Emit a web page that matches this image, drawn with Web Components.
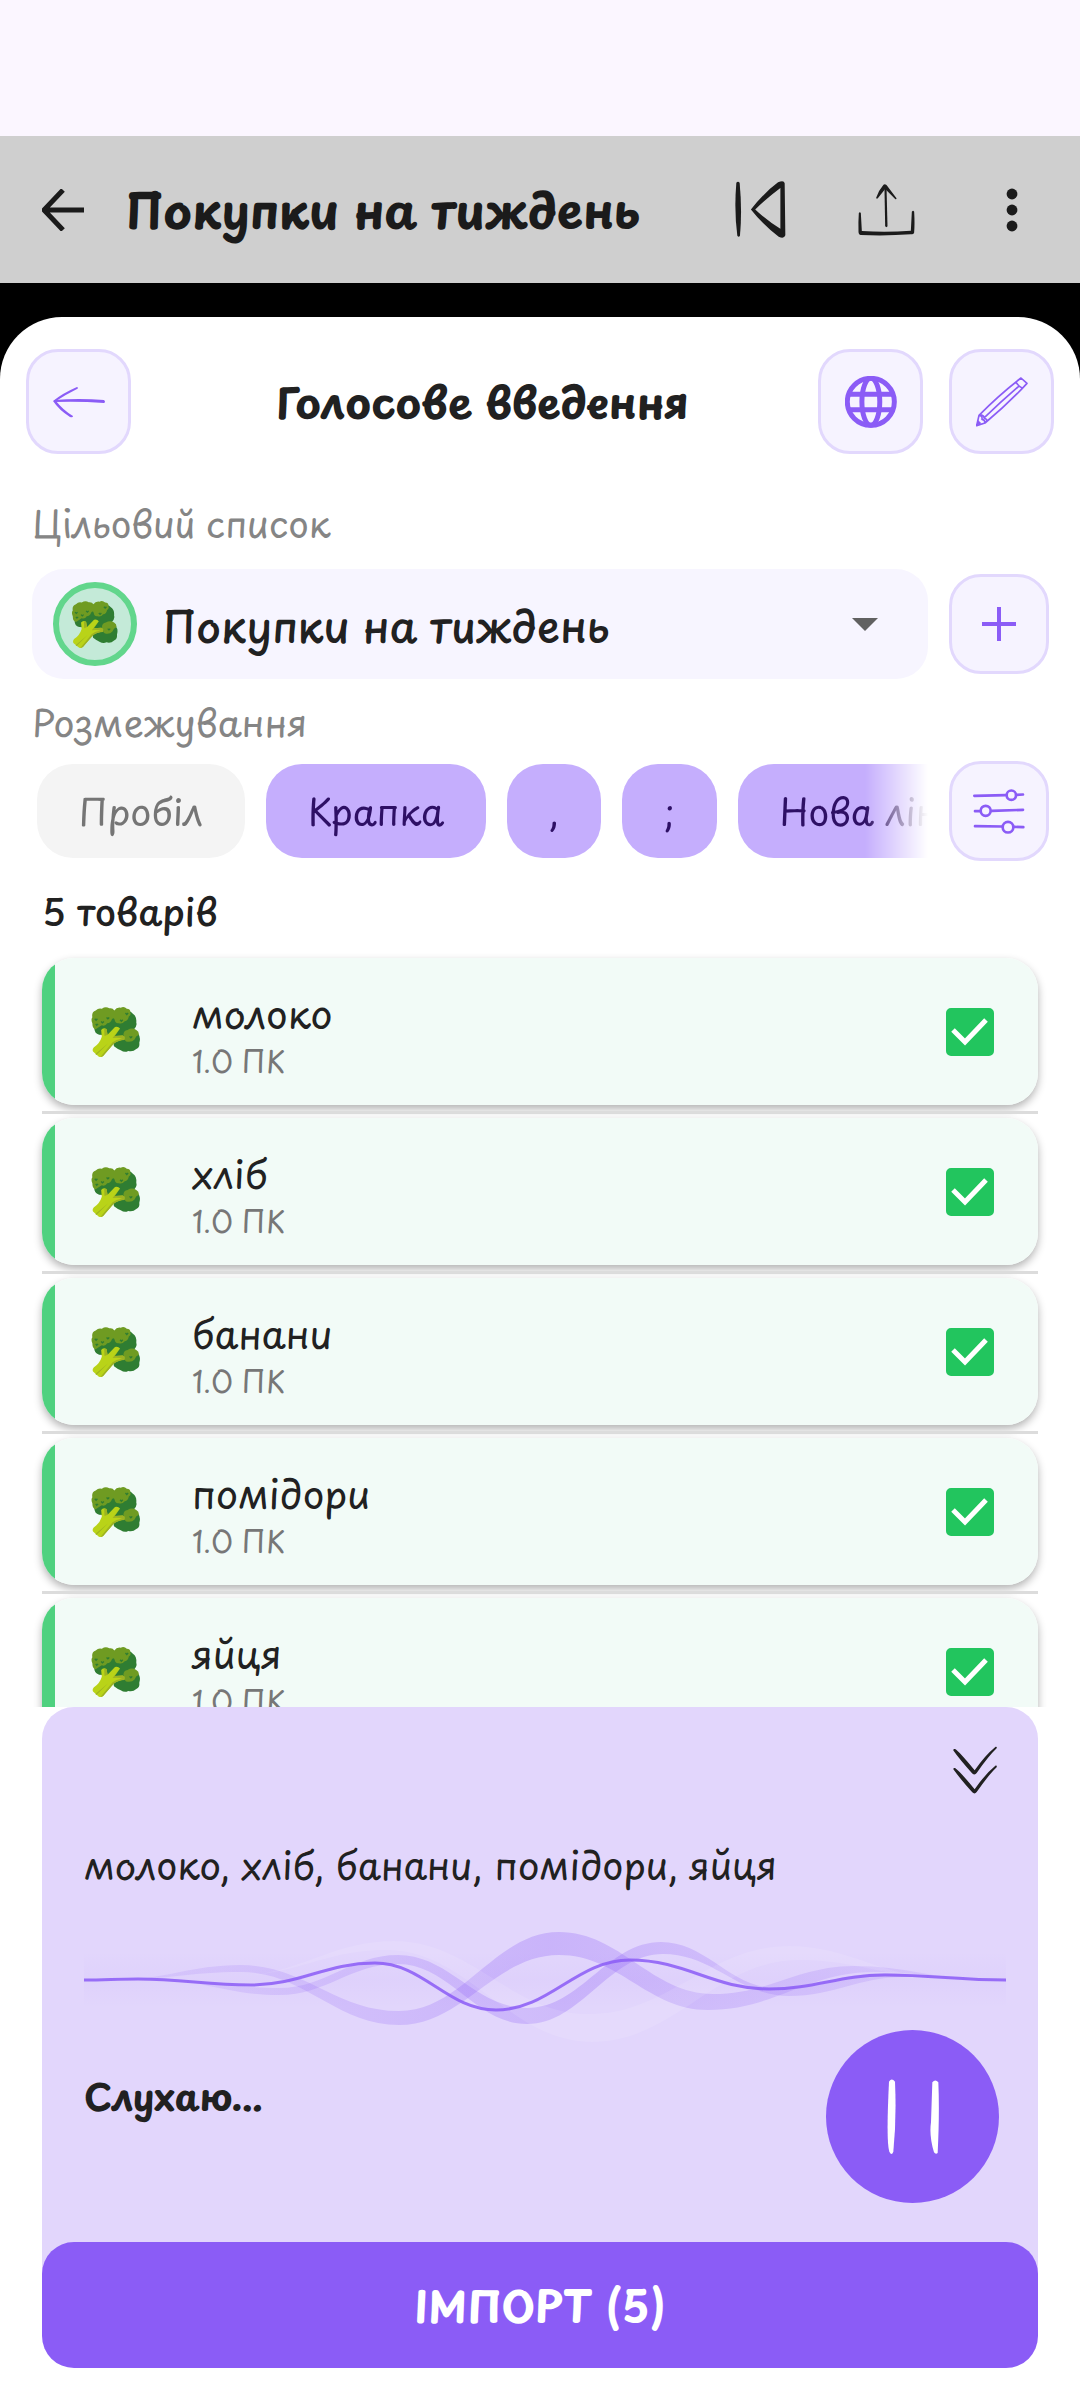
<!DOCTYPE html>
<html lang="uk">
<head>
<meta charset="utf-8">
<meta name="viewport" content="width=device-width, initial-scale=1">
<title>Голосове введення</title>
<style>
  body {
    margin: 0;
    background: #000;
    font-family: "Playpen Sans", Pangolin, Mynerve, "Patrick Hand", "Shantell Sans", Roboto, "Noto Sans", sans-serif;
    --text: #212121;
    --muted: #858585;
    --accent: #8b5cf6;
    --accent-line: #e2d8fd;
    --accent-soft: #f6f3ff;
    --panel: #e2d6fc;
  }
</style>
</head>
<body>
<shopping-app></shopping-app>

<script>
// icons.js
const ICONS = {
  back: {
    box: '0 0 42 42',
    body: '<path d="M21 1 L2 21 L21 41 M2 21 H42" fill="none" stroke="currentColor" stroke-width="5"/>',
  },
  previous: {
    box: '102 92 154 172',
    body: `<path d="M106 97 Q111 91 116 97 Q124 180 117 257 Q113 264 109 257 Q99 180 106 97Z"/>
      <path fill-rule="evenodd" d="M150 178 Q190 127 232 96 Q250 88 252 99 L254 256 Q250 268 234 260 Q190 228 150 178Z M163 178 Q200 213 239 236 L239 113 Q200 142 163 178Z"/>`,
  },
  share: {
    box: '472 101 170 156',
    body: `<path d="M474 188 Q477 184 480 188 L483 242 Q557 247 630 241 L633 184 Q637 179 640 184 Q642 220 640 246 Q640 252 630 252 Q557 257 480 254 Q473 253 473 244 Q472 215 474 188Z"/>
      <path d="M551 120 L551 108 L557 108 L560 228 Q557 233 553 228Z"/>
      <path d="M526 142 Q534 119 548 103 Q552 100 557 104 L587 144 Q587 148 583 146 L553 116 L531 144 Q527 147 526 142Z"/>`,
  },
  more: {
    box: '0 0 12 44',
    body: '<circle cx="6" cy="6" r="5.4"/><circle cx="6" cy="22" r="5.4"/><circle cx="6" cy="38" r="5.4"/>',
  },
  arrow: {
    box: '0 0 52 32',
    body: `<path d="M1 14 Q26 12 51 14 Q53 16 51 17 Q26 15 1 16Z"/>
      <path d="M0 15 Q10 7 24 1 Q26 2 24 3 Q12 9 3 15 Q10 24 20 30 Q20 32 17 31 Q6 24 0 15Z"/>`,
  },
  globe: {
    box: '0 0 157 157',
    body: `<g fill="none" stroke="currentColor" stroke-width="15">
      <circle cx="78" cy="78" r="71"/><ellipse cx="78" cy="78" rx="27" ry="71"/>
      <path d="M12 55 H145 M12 102 H145"/></g>`,
  },
  pencil: {
    box: '0 0 156 148',
    body: `<g fill="none" stroke="currentColor" stroke-width="5" stroke-linejoin="round" stroke-linecap="round">
      <path d="M9 114 Q70 52 135 2 L153 18 Q98 78 27 137 L2 145 Z M9 114 Q20 115 18 126 Q27 127 27 137 M120 15 Q130 30 139 32 M25 121 Q78 70 128 27 M17 113 Q25 116 24 122 Q33 125 33 131"/></g>
      <path d="M6 128 L16 138 L1 146Z"/>`,
  },
  plus: {
    box: '0 0 34 34',
    body: '<path d="M17 0 V34 M0 17 H34" fill="none" stroke="currentColor" stroke-width="4"/>',
  },
  tune: {
    box: '0 0 156 134',
    body: `<g fill="none" stroke="currentColor" stroke-width="8" stroke-linecap="round">
      <path d="M4 20 L98 18 M131 17 L150 16 M6 66 L20 66 M56 65 L150 62 M6 111 L88 112 M122 113 L151 114"/>
      <circle cx="115" cy="18" r="14"/><circle cx="38" cy="65" r="15"/><circle cx="105" cy="114" r="16"/></g>`,
  },
  collapse: {
    box: '0 0 130 142',
    body: `<path d="M1 13 Q0 8 6 9 Q18 16 64 72 Q94 28 126 2 Q131 1 129 7 Q105 30 70 80 Q64 88 57 81 Q20 40 1 13Z"/>
      <path transform="translate(0 56)" d="M1 13 Q0 8 6 9 Q18 16 64 72 Q94 28 126 2 Q131 1 129 7 Q105 30 70 80 Q64 88 57 81 Q20 40 1 13Z"/>`,
  },
  pause: {
    box: '0 0 156 228',
    body: `<path d="M6 8 Q14 -5 24 8 Q29 120 19 218 Q14 232 7 218 Q-3 190 6 8Z"/>
      <path d="M136 10 Q145 -1 154 10 Q158 100 152 222 Q146 227 141 220 Q126 170 132 130Z"/>`,
  },
  caret: {
    box: '0 0 26 13',
    body: '<path d="M0 0 H26 L13 13Z"/>',
  },
  broccoli: {
    box: '0 0 144 148',
    body: `<path fill="#2f7d32" d="M8 58 Q6 78 22 82 L60 84 L66 116 Q76 124 86 128 Q98 136 108 130 Q122 134 132 124 Q143 120 141 106 Q146 90 138 80 Q134 68 122 70 Q136 58 132 46 Q134 28 122 20 Q112 8 98 16 L40 20Z"/>
      <path fill="#6f9b22" d="M2 48 Q-3 36 2 30 Q-1 14 12 10 Q20 2 30 5 Q42 -3 52 4 Q62 2 67 10 Q74 0 86 2 Q96 -3 104 5 Q116 6 114 16 Q118 24 110 28 Q108 40 98 42 Q90 52 80 48 Q70 50 68 38 Q66 30 60 36 Q56 48 46 48 Q40 58 30 54 Q20 60 12 66 Q2 64 2 48Z"/>
      <path fill="#6f9b22" d="M94 82 Q94 70 106 68 Q120 60 132 68 Q140 72 140 82 Q130 86 127 96 Q120 104 108 103 Q96 104 94 82Z"/>
      <path fill="#b9d318" d="M28 68 Q34 60 44 65 L47 82 L69 59 Q78 56 84 64 L68 86 L92 84 Q98 86 97 96 Q76 100 66 108 L34 145 Q26 152 18 144 L4 132 Q1 126 6 120 Q24 108 30 88Z"/>
      <path fill="#9db223" d="M84 64 L68 86 L92 84 L98 88 L97 98 Q76 99 65 109 L34 145 L26 148 L62 104 Q72 96 90 93 Q76 90 62 92 Z M37 64 L44 66 L47 82 L38 86Z M48 108 L14 142 L11 139Z"/>
      <path fill="none" stroke="#2f7d32" stroke-width="4" d="M9 35 l4 4 l4 -4 M28 43 l4 4 l4 -4 M44 31 l4 4 l4 -4 M12 50 l3 4 l4 -4 M84 38 l4 4 l4 -4 M100 18 l4 4 l4 -4 M112 87 l4 4 l4 -4"/>`,
  },
}

class SketchIcon extends HTMLElement {
  constructor() {
    super()
    this.attachShadow({ mode: 'open' })
  }

  connectedCallback() {
    const { box, body } = ICONS[this.getAttribute('name')]
    this.shadowRoot.innerHTML = `
      <style>
        :host { display: inline-block; flex: none; line-height: 0; }
        svg { display: block; width: 100%; height: 100%; fill: currentColor; }
      </style>
      <svg viewBox="${box}" aria-hidden="true">${body}</svg>
    `
  }
}
customElements.define('sketch-icon', SketchIcon)

// rounded-button.js
customElements.define('rounded-button', class RoundedButton extends HTMLElement {
  constructor() {
    super()
    this.attachShadow({ mode: 'open' })
  }

  connectedCallback() {
    this.shadowRoot.innerHTML = `
      <style>
        :host { display: block; flex: none; width: 100px; height: 100px; }
        :host([large]) { width: 105px; height: 105px; }
        button {
          display: flex;
          align-items: center;
          justify-content: center;
          box-sizing: border-box;
          width: 100%;
          height: 100%;
          padding: 0;
          border: 3px solid var(--accent-line);
          border-radius: 32px;
          background: var(--accent-soft);
          color: var(--accent);
        }
      </style>
      <button type="button" aria-label="${this.getAttribute('label')}"><slot></slot></button>
    `
  }
})

// app-bar.js
customElements.define('app-bar', class AppBar extends HTMLElement {
  constructor() {
    super()
    this.attachShadow({ mode: 'open' }).innerHTML = `
      <style>
        :host {
          display: block;
          padding-top: 136px;
          background: #fbf6ff;
          color: #1b1b1b;
        }
        header {
          display: flex;
          align-items: stretch;
          height: 147px;
          padding-right: 5px;
          background: #cfcfcf;
        }
        h1 {
          flex: 1;
          min-width: 0;
          margin: 0;
          font-size: 48px;
          line-height: 147px;
          font-weight: 700;
          white-space: nowrap;
        }
        button {
          display: flex;
          flex: none;
          align-items: center;
          justify-content: center;
          width: 126px;
          padding: 0;
          border: 0;
          background: none;
          color: inherit;
        }
        [name=back] { width: 42px; height: 42px; }
        [name=previous] { width: 51px; height: 57px; }
        [name=share] { width: 57px; height: 52px; }
        [name=more] { width: 12px; height: 44px; }
      </style>
      <header>
        <button type="button" aria-label="Назад"><sketch-icon name="back"></sketch-icon></button>
        <h1><slot></slot></h1>
        <button type="button" aria-label="Попередній"><sketch-icon name="previous"></sketch-icon></button>
        <button type="button" aria-label="Поділитися"><sketch-icon name="share"></sketch-icon></button>
        <button type="button" aria-label="Більше"><sketch-icon name="more"></sketch-icon></button>
      </header>
    `
  }
})

// sheet-header.js
customElements.define('sheet-header', class SheetHeader extends HTMLElement {
  constructor() {
    super()
    this.attachShadow({ mode: 'open' }).innerHTML = `
      <style>
        :host {
          display: flex;
          align-items: center;
          gap: 26px;
          padding: 32px 26px 0;
        }
        h2 {
          flex: 1;
          margin: 0;
          padding-left: 16px;
          font-size: 43px;
          line-height: 56px;
          font-weight: 700;
          text-align: center;
          white-space: nowrap;
        }
        [name=arrow] { width: 52px; height: 32px; }
        [name=globe] { width: 52px; height: 52px; }
        [name=pencil] { width: 52px; height: 50px; }
      </style>
      <rounded-button large label="Назад"><sketch-icon name="arrow"></sketch-icon></rounded-button>
      <h2><slot></slot></h2>
      <rounded-button large label="Мова"><sketch-icon name="globe"></sketch-icon></rounded-button>
      <rounded-button large label="Редагувати"><sketch-icon name="pencil"></sketch-icon></rounded-button>
    `
  }
})

// target-picker.js
customElements.define('target-picker', class TargetPicker extends HTMLElement {
  constructor() {
    super()
    this.attachShadow({ mode: 'open' }).innerHTML = `
      <style>
        :host { display: block; padding: 45px 31px 0 32px; }
        label {
          display: block;
          margin-bottom: 22px;
          color: var(--muted);
          font-size: 37px;
          line-height: 48px;
        }
        .row { display: flex; align-items: center; gap: 21px; }
        .field {
          position: relative;
          display: flex;
          flex: 1;
          align-items: center;
          height: 110px;
          border-radius: 32px;
          background: #f7f5ff;
        }
        .badge {
          display: flex;
          align-items: center;
          justify-content: center;
          box-sizing: border-box;
          width: 84px;
          height: 84px;
          margin-left: 21px;
          border: 6px solid #62d68c;
          border-radius: 50%;
          background: #c4ead8;
        }
        select {
          flex: 1;
          height: 100%;
          padding: 2px 80px 0 26px;
          border: 0;
          appearance: none;
          background: none;
          color: var(--text);
          font-family: inherit;
          font-size: 43px;
          font-weight: 500;
        }
        [name=broccoli] { width: 46px; height: 47px; }
        [name=caret] {
          position: absolute;
          right: 50px;
          width: 26px;
          height: 13px;
          color: #616161;
          pointer-events: none;
        }
        [name=plus] { width: 34px; height: 34px; }
      </style>
      <label for="target">Цільовий список</label>
      <div class="row">
        <div class="field">
          <span class="badge"><sketch-icon name="broccoli"></sketch-icon></span>
          <select id="target"><option>Покупки на тиждень</option></select>
          <sketch-icon name="caret"></sketch-icon>
        </div>
        <rounded-button label="Додати список"><sketch-icon name="plus"></sketch-icon></rounded-button>
      </div>
    `
  }
})

// separator-chips.js
const SEPARATORS = [
  { text: 'Пробіл', on: false },
  { text: 'Крапка', on: true },
  { text: ',', on: true },
  { text: ';', on: true },
  { text: 'Нова лінія', on: true },
]

customElements.define('separator-chips', class SeparatorChips extends HTMLElement {
  constructor() {
    super()
    this.attachShadow({ mode: 'open' }).innerHTML = `
      <style>
        :host { display: block; padding: 19px 31px 0 32px; }
        h3 {
          margin: 0 0 15px;
          color: var(--muted);
          font-size: 37px;
          line-height: 48px;
          font-weight: 400;
        }
        .row { display: flex; align-items: center; gap: 21px; }
        .chips {
          display: flex;
          flex: 1;
          gap: 21px;
          min-width: 0;
          padding-left: 5px;
          overflow: hidden;
          mask-image: linear-gradient(to left, transparent, #000 63px);
        }
        button {
          flex: none;
          height: 94px;
          padding: 0 42px;
          border: 0;
          border-radius: 36px;
          background: #f4f4f4;
          color: #757575;
          font-family: inherit;
          font-size: 37px;
          white-space: nowrap;
        }
        button[aria-pressed=true] { background: #c5aefd; color: #2e1065; }
        [name=tune] { width: 52px; height: 45px; }
      </style>
      <h3>Розмежування</h3>
      <div class="row">
        <div class="chips">
          ${SEPARATORS.map(s => `<button type="button" aria-pressed="${s.on}">${s.text}</button>`).join('')}
        </div>
        <rounded-button label="Налаштування"><sketch-icon name="tune"></sketch-icon></rounded-button>
      </div>
    `
    this.shadowRoot.querySelectorAll('button').forEach(button => {
      button.addEventListener('click', () => {
        button.setAttribute('aria-pressed', button.getAttribute('aria-pressed') !== 'true')
      })
    })
  }
})

// product-card.js
customElements.define('product-card', class ProductCard extends HTMLElement {
  constructor() {
    super()
    this.attachShadow({ mode: 'open' }).innerHTML = `
      <style>
        :host { display: block; }
        :host(:not(:first-of-type)) { margin-top: 6px; padding-top: 4px; border-top: 3px solid #dcdcdc; }
        .card {
          display: flex;
          align-items: center;
          height: 147px;
          padding: 0 44px 0 49px;
          border-radius: 32px;
          background: linear-gradient(to right, #4fd17f 13px, #f2fbf7 13px);
          box-shadow: 0 4px 8px rgba(0, 0, 0, .3);
        }
        label {
          display: flex;
          flex: 1;
          flex-direction: column;
          margin-left: 51px;
          padding-top: 8px;
          color: var(--text);
          font-size: 39px;
          line-height: 50px;
        }
        small { color: #777; font-size: 30px; line-height: 46px; }
        input {
          width: 48px;
          height: 48px;
          margin: 0;
          appearance: none;
          border: 3px solid #22c55e;
          border-radius: 5px;
        }
        input:checked {
          background: #22c55e url('data:image/svg+xml,<svg xmlns="http://www.w3.org/2000/svg" viewBox="0 0 48 48"><path d="M7 22 L19 34 L40 12" fill="none" stroke="white" stroke-width="5"/></svg>') border-box;
        }
        [name=broccoli] { width: 50px; height: 50px; }
      </style>
      <div class="card">
        <sketch-icon name="broccoli"></sketch-icon>
        <label for="pick"><slot></slot><small>1.0 ПК</small></label>
        <input id="pick" type="checkbox" checked>
      </div>
    `
  }
})

// wave-line.js
// every point is a crest or a trough, so the tangent there is flat
function trace(points) {
  let d = ''
  for (let i = 1; i < points.length; i++) {
    const [x0, y0] = points[i - 1]
    const [x1, y1] = points[i]
    const dx = (x1 - x0) * 0.4
    d += ` C${x0 + dx} ${y0} ${x1 - dx} ${y1} ${x1} ${y1}`
  }
  return d
}

const line = points => `M${points[0]}` + trace(points)
const band = (upper, lower) => {
  const back = [...lower].reverse()
  return line(upper) + ` L${back[0]}` + trace(back) + 'Z'
}

const VOICE = [[0, 100], [54, 99], [167, 105], [291, 83], [412, 130], [546, 80], [685, 109], [801, 95], [922, 100]]
const BANDS = [
  {
    fill: 'url(#fade)',
    upper: [[30, 100], [157, 85], [315, 131], [475, 52], [629, 114], [770, 86], [900, 99]],
    lower: [[30, 100], [157, 92], [315, 145], [475, 75], [624, 130], [790, 92], [900, 99]],
  },
  {
    fill: 'url(#fade)',
    upper: [[60, 98], [195, 108], [314, 75], [443, 128], [577, 62], [692, 108], [801, 93], [900, 99]],
    lower: [[60, 98], [195, 115], [314, 84], [443, 144], [579, 74], [705, 116], [820, 97], [900, 99]],
  },
  {
    fill: 'rgba(255, 255, 255, .1)',
    upper: [[150, 96], [310, 61], [505, 134], [705, 66], [860, 98]],
    lower: [[150, 96], [302, 70], [508, 162], [715, 80], [860, 98]],
  },
]

customElements.define('wave-line', class WaveLine extends HTMLElement {
  constructor() {
    super()
    this.attachShadow({ mode: 'open' }).innerHTML = `
      <style>
        :host { display: block; }
        svg { display: block; width: 100%; height: 100px; overflow: visible; }
      </style>
      <svg viewBox="0 50 922 100" preserveAspectRatio="none" aria-hidden="true">
        <defs>
          <linearGradient id="glow" x2="0" y2="1">
            <stop offset="0" stop-color="#8b5cf6" stop-opacity="0"/>
            <stop offset=".5" stop-color="#8b5cf6" stop-opacity=".04"/>
            <stop offset="1" stop-color="#8b5cf6" stop-opacity="0"/>
          </linearGradient>
          <linearGradient id="fade">
            <stop offset="0" stop-color="#8b5cf6" stop-opacity=".1"/>
            <stop offset=".5" stop-color="#8b5cf6" stop-opacity=".28"/>
            <stop offset="1" stop-color="#8b5cf6" stop-opacity=".1"/>
          </linearGradient>
        </defs>
        <rect y="72" width="922" height="56" fill="url(#glow)"/>
        ${BANDS.map(b => `<path d="${band(b.upper, b.lower)}" fill="${b.fill}"/>`).join('')}
        <path d="${line(VOICE)}" fill="none" stroke="#8b5cf6" stroke-opacity=".85" stroke-width="3"/>
      </svg>
    `
  }
})

// voice-panel.js
customElements.define('voice-panel', class VoicePanel extends HTMLElement {
  constructor() {
    super()
    this.attachShadow({ mode: 'open' }).innerHTML = `
      <style>
        :host {
          display: block;
          margin: 0 42px;
          padding: 21px 32px 102px 42px;
          border-radius: 32px 32px 0 0;
          background: var(--panel);
          color: var(--text);
        }
        button { display: flex; align-items: center; justify-content: center; padding: 0; border: 0; }
        .collapse {
          width: 84px;
          height: 84px;
          margin: 0 -11px 0 auto;
          background: none;
          color: inherit;
        }
        p { margin: 29px 0 41px; font-size: 38px; line-height: 48px; }
        .row { display: flex; align-items: flex-start; justify-content: space-between; padding-right: 7px; }
        strong { padding-top: 42px; font-size: 37px; line-height: 48px; }
        .pause {
          width: 173px;
          height: 173px;
          border-radius: 50%;
          background: var(--accent);
          color: #fff;
        }
        [name=collapse] { width: 44px; height: 48px; }
        [name=pause] { width: 52px; height: 76px; }
      </style>
      <button class="collapse" type="button" aria-label="Згорнути"><sketch-icon name="collapse"></sketch-icon></button>
      <p><slot></slot></p>
      <wave-line></wave-line>
      <div class="row">
        <strong>Слухаю...</strong>
        <button class="pause" type="button" aria-label="Пауза"><sketch-icon name="pause"></sketch-icon></button>
      </div>
    `
  }
})

// import-button.js
customElements.define('import-button', class ImportButton extends HTMLElement {
  constructor() {
    super()
    this.attachShadow({ mode: 'open' }).innerHTML = `
      <style>
        /* covers the lower edge of the panel */
        :host { display: block; position: relative; margin: -63px 42px 32px; }
        button {
          width: 100%;
          height: 126px;
          border: 0;
          border-radius: 32px;
          background: var(--accent);
          color: #fff;
          font-family: inherit;
          font-size: 43px;
          font-weight: 700;
        }
      </style>
      <button type="button"><slot></slot></button>
    `
  }
})

// shopping-app.js
const PRODUCTS = ['молоко', 'хліб', 'банани', 'помідори', 'яйця']

customElements.define('shopping-app', class ShoppingApp extends HTMLElement {
  constructor() {
    super()
    this.attachShadow({ mode: 'open' }).innerHTML = `
      <style>
        :host { display: flex; flex-direction: column; height: 100vh; }
        main {
          display: flex;
          flex: 1;
          flex-direction: column;
          min-height: 0;
          margin-top: 34px;
          border-radius: 62px 62px 0 0;
          background: #fff;
          color: var(--text);
        }
        .count {
          margin: 26px 42px 0;
          font-size: 37px;
          line-height: 48px;
          font-weight: 500;
        }
        .list {
          flex: 1;
          min-height: 0;
          padding: 23px 42px 0;
          overflow-y: auto;
          scrollbar-width: none;
        }
      </style>
      <app-bar>Покупки на тиждень</app-bar>
      <main>
        <sheet-header>Голосове введення</sheet-header>
        <target-picker></target-picker>
        <separator-chips></separator-chips>
        <p class="count">${PRODUCTS.length} товарів</p>
        <div class="list">
          ${PRODUCTS.map(name => `<product-card>${name}</product-card>`).join('')}
        </div>
        <voice-panel>${PRODUCTS.join(', ')}</voice-panel>
        <import-button>ІМПОРТ (${PRODUCTS.length})</import-button>
      </main>
    `
  }
})
</script>
</body>
</html>
